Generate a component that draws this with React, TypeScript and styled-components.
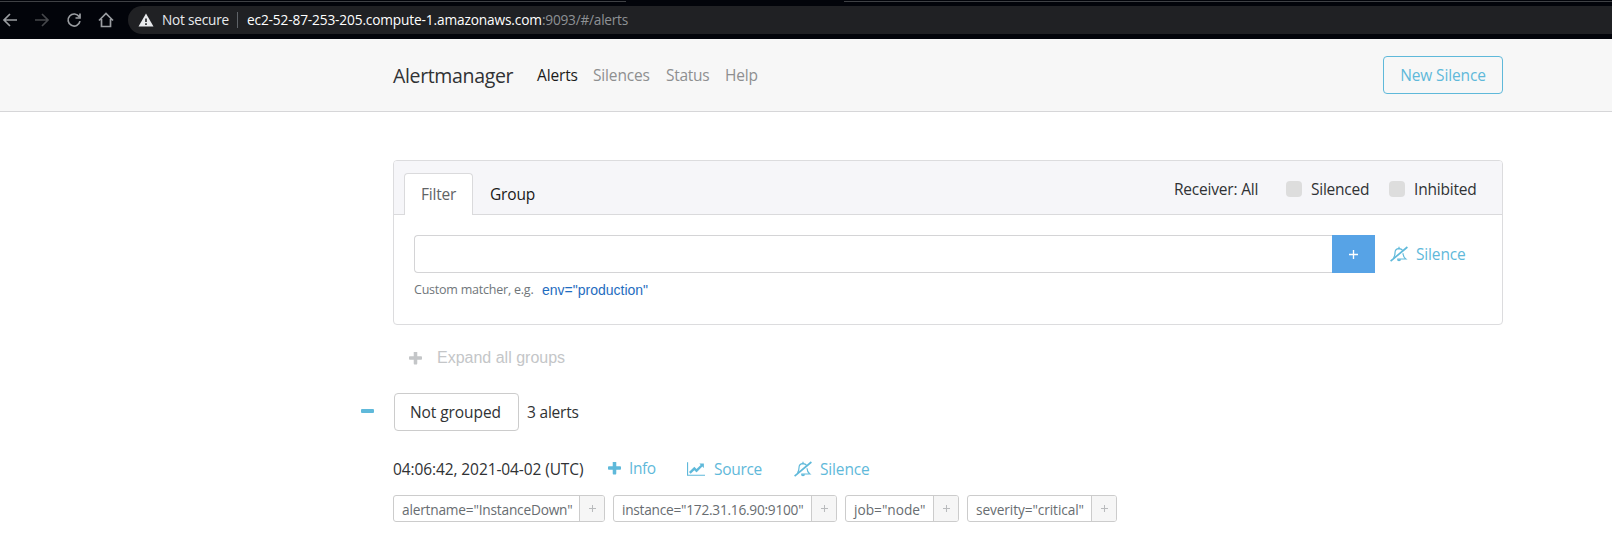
import React from 'react';
import styled, { createGlobalStyle } from 'styled-components';

const UI = '"Open Sans", "Noto Sans", sans-serif';
const ARIAL = '"Liberation Sans", Arial, sans-serif';
const BLUE = '#5fb9da';

const Global = createGlobalStyle`
  *, *::before, *::after { box-sizing: border-box; }
  body { margin: 0; background: #fff; color: #303234; font: 400 15.5px/24px ${UI}; letter-spacing: -0.15px; }
  button { font: inherit; letter-spacing: inherit; color: inherit; background: none; border: 0; padding: 0; margin: 0; }
  svg { display: block; flex: none; }
`;

/* Text with a fixed advance, so that neighbours keep their place. */
const Text = styled.span<{ $w?: number; $size?: number; $color?: string; $ls?: number; $arial?: boolean }>`
  display: block;
  flex: none;
  white-space: nowrap;
  ${(p) => p.$w && `width: ${p.$w}px;`}
  ${(p) => p.$size && `font-size: ${p.$size}px;`}
  ${(p) => p.$color && `color: ${p.$color};`}
  ${(p) => p.$ls !== undefined && `letter-spacing: ${p.$ls}px;`}
  ${(p) => p.$arial && `font-family: ${ARIAL}; letter-spacing: 0;`}
`;

const Browser = styled.div`
  height: 39px;
  background: #02040a;
  overflow: hidden;
`;
const TabStrip = styled.div`
  display: flex;
  justify-content: space-between;
  height: 6px;
  padding-top: 1px;
`;
const TabEdge = styled.div<{ $w: number }>`
  width: ${(p) => p.$w}px;
  height: 1px;
  background: #3f4145;
`;
const Toolbar = styled.div`
  display: flex;
  height: 28px;
`;
const NavIcons = styled.div`
  display: flex;
  align-items: center;
  width: 128px;
  gap: 16px;
  padding-left: 2px;
`;
const AddressBar = styled.div`
  flex: 1;
  display: flex;
  align-items: center;
  height: 28px;
  padding-left: 10px;
  border-radius: 14px 0 0 14px;
  background: #202124;
  color: #e8eaed;
`;
const Divider = styled.span`
  width: 1px;
  height: 16px;
  margin: 0 9px 0 7px;
  background: #5f6368;
`;

const Header = styled.header`
  height: 73px;
  background: #f7f7f7;
  border-bottom: 1px solid #d6d6d8;
`;
const Container = styled.div`
  width: 1110px;
  margin-left: 393px;
`;
const HeaderRow = styled(Container)`
  display: flex;
  align-items: center;
  height: 72px;
`;
const Brand = styled(Text)`
  padding-top: 2px;
`;
const Nav = styled.nav`
  display: flex;
  flex: 1;
  gap: 16px;
  color: #8e8f90;
`;
const OutlineButton = styled.button`
  width: 120px;
  height: 38px;
  border: 1px solid ${BLUE};
  border-radius: 4px;
  color: ${BLUE};
`;

const Card = styled(Container).attrs({ as: 'section' })`
  height: 165px;
  margin-top: 48px;
  border: 1px solid #dcdcde;
  border-radius: 4px;
`;
const CardHeader = styled.div`
  display: flex;
  height: 54px;
  padding: 12px 25px 0 10px;
  background: #f6f6f9;
  border-bottom: 1px solid #dadadc;
  border-radius: 3px 3px 0 0;
`;
const Tab = styled.div<{ $active?: boolean }>`
  height: 42px;
  padding: 8px 16px 0;
  border: 1px solid ${(p) => (p.$active ? '#dadadc' : 'transparent')};
  border-bottom: 0;
  border-radius: 4px 4px 0 0;
  background: ${(p) => (p.$active ? '#fff' : 'transparent')};
  color: ${(p) => (p.$active ? '#5f6366' : '#1a1a1a')};
`;
const Options = styled.div`
  display: flex;
  align-items: center;
  height: 32px;
  margin-left: auto;
`;
const Check = styled.span`
  width: 16px;
  height: 16px;
  margin-right: 9px;
  border-radius: 4px;
  background: #ddd;
`;
const CardBody = styled.div`
  padding: 20px;
`;
const FilterRow = styled.div`
  display: flex;
  align-items: center;
`;
const FilterInput = styled.input`
  width: 918px;
  height: 38px;
  border: 1px solid #d4d4d6;
  border-right: 0;
  border-radius: 4px 0 0 4px;
  outline: 0;
  background: #fff;
`;
const AddButton = styled.button`
  display: flex;
  align-items: center;
  justify-content: center;
  width: 43px;
  height: 38px;
  margin-right: 15px;
  background: #57a3e6;
  color: #fff;
`;
const Hint = styled.div`
  display: flex;
  margin-top: 5px;
  color: #70767a;
`;

const ExpandRow = styled(Container)`
  display: flex;
  align-items: center;
  gap: 15px;
  height: 24px;
  margin-top: 21px;
  padding-left: 16px;
  color: #c4c6c8;
`;
const GroupRow = styled.div`
  display: flex;
  align-items: center;
  height: 38px;
  margin: 23px 0 0 361px;
`;
const GroupButton = styled.button`
  display: flex;
  align-items: center;
  width: 125px;
  height: 38px;
  margin: 0 8px 0 20px;
  padding-left: 15px;
  border: 1px solid #ccc;
  border-radius: 4px;
`;
const AlertRow = styled(Container)`
  display: flex;
  align-items: center;
  height: 24px;
  margin-top: 26px;
`;
const Action = styled.button<{ $gap: number; $after?: number; $lift?: number }>`
  display: flex;
  align-items: center;
  gap: ${(p) => p.$gap}px;
  height: 24px;
  margin: 0 ${(p) => p.$after ?? 0}px ${(p) => p.$lift ?? 0}px 0;
  color: ${BLUE};
  text-align: left;
`;
const Labels = styled(Container)`
  display: flex;
  gap: 8px;
  margin-top: 14px;
`;
const Label = styled.div<{ $w: number }>`
  display: flex;
  width: ${(p) => p.$w}px;
  height: 27px;
  border: 1px solid #ccc;
  border-radius: 3px;
  color: #686d71;
  line-height: 27px;
  overflow: hidden;
`;
const LabelText = styled(Text)`
  flex: 1;
  padding-left: 8px;
`;
const LabelAdd = styled.button`
  display: flex;
  align-items: center;
  justify-content: center;
  width: 25px;
  border-left: 1px solid #ccc;
  background: #f6f6f6;
  color: #b9bbbd;
`;

const ThinPlus = ({ size = 7 }: { size?: number }) => (
  <svg width={size} height={size} viewBox="0 0 8 8" stroke="currentColor" strokeWidth="1.2">
    <path d="M4 0v8M0 4h8" />
  </svg>
);
const Plus = () => (
  <svg width="13" height="13" viewBox="192 192 1408 1408" fill="currentColor">
    <path d="M1600 736v192q0 40-28 68t-68 28h-416v416q0 40-28 68t-68 28h-192q-40 0-68-28t-28-68v-416h-416q-40 0-68-28t-28-68v-192q0-40 28-68t68-28h416v-416q0-40 28-68t68-28h192q40 0 68 28t28 68v416h416q40 0 68 28t28 68z" />
  </svg>
);
const Minus = () => (
  <svg width="13" height="13" viewBox="0 0 13 13">
    <rect y="3" width="13" height="4" rx="1" fill={BLUE} />
  </svg>
);
const Chart = () => (
  <svg width="18" height="16" viewBox="0 0 2048 1792" fill="currentColor">
    <path d="M2048 1536v128h-2048v-1536h128v1408h1920zm-128-1248v435q0 21-19.5 29.5t-35.5-7.5l-121-121-633 633q-10 10-23 10t-23-10l-233-233-416 416-192-192 585-585q10-10 23-10t23 10l233 233 464-464-121-121q-16-16-7.5-35.5t29.5-19.5h435q14 0 23 9t9 23z" />
  </svg>
);
const BellOff = () => (
  <svg width="18" height="16" viewBox="0 0 18 16" fill="none" stroke="currentColor" strokeWidth="1.2">
    <path d="M3.5 11.8C4.8 10.400 5 8.600 5 6.800C5 4.400 6.400 2.700 9 2.600C10.800 2.700 11.900 3.400 12.600 4.400M13 7.200C13.100 9.400 13.600 11.300 15.800 13H7.200" />
    <path d="M9 2.500V.8" />
    <path d="M7 13.300a2 2 0 0 0 4 0z" fill="currentColor" stroke="none" />
    <path d="M.6 15.200L17.400 1" strokeWidth="1.700" />
  </svg>
);
const BrowserIcon = ({ d, color = '#9a9da1' }: { d: string; color?: string }) => (
  <svg width="16" height="16" viewBox="0 0 16 16" fill="none" stroke={color} strokeWidth="1.7">
    <path d={d} />
  </svg>
);
const Warning = () => (
  <svg width="16" height="14" viewBox="0 0 16 14">
    <path d="M8 .5L15.500 13.500H.5z" fill="#e8eaed" />
    <path d="M8 5.500v3.500M8 10.200v1.700" stroke="#202124" strokeWidth="1.600" />
  </svg>
);
const Security = styled.div`
  width: 76px;
  padding-left: 8px;
`;

const LABELS = [
  { text: 'alertname="InstanceDown"', width: 212, ls: -0.2 },
  { text: 'instance="172.31.16.90:9100"', width: 224, ls: -0.25 },
  { text: 'job="node"', width: 114, ls: 0 },
  { text: 'severity="critical"', width: 150, ls: -0.1 },
];

export default function App() {
  return (
    <>
      <Global />
      <Browser>
        <TabStrip>
          <TabEdge $w={626} />
          <TabEdge $w={768} />
        </TabStrip>
        <Toolbar>
          <NavIcons>
            <BrowserIcon d="M15 8H2M8 2L2 8l6 6" />
            <BrowserIcon d="M1 8h13M8 2l6 6-6 6" color="#45474b" />
            <BrowserIcon d="M13.200 4.800A6 6 0 1 0 14 9.200M14 1.500V6H9.500" />
            <BrowserIcon d="M1 8.500L8 1.500l7 7M3.500 7v7.500h9V7" />
          </NavIcons>
          <AddressBar>
            <Warning />
            <Security><Text $size={13.6} $ls={-0.2}>Not secure</Text></Security>
            <Divider />
            <Text $w={295} $size={13.7} $color="#fff" $ls={-0.15}>ec2-52-87-253-205.compute-1.amazonaws.com</Text>
            <Text $size={13.7} $color="#8e9195" $ls={-0.25}>:9093/#/alerts</Text>
          </AddressBar>
        </Toolbar>
      </Browser>

      <Header>
        <HeaderRow>
          <Brand $w={144} $size={19.5} $ls={-0.35}>Alertmanager</Brand>
          <Nav>
            <Text $w={40} $color="#1a1a1a">Alerts</Text>
            <Text $w={57}>Silences</Text>
            <Text $w={43} $ls={-0.3}>Status</Text>
            <Text>Help</Text>
          </Nav>
          <OutlineButton>New Silence</OutlineButton>
        </HeaderRow>
      </Header>

      <Card>
        <CardHeader>
          <Tab $active><Text $w={35} $ls={-0.2}>Filter</Text></Tab>
          <Tab><Text>Group</Text></Tab>
          <Options>
            <Text $w={112} $ls={-0.2}>Receiver: All</Text>
            <Check />
            <Text $w={78} $ls={-0.25}>Silenced</Text>
            <Check />
            <Text $w={63} $ls={-0.2}>Inhibited</Text>
          </Options>
        </CardHeader>
        <CardBody>
          <FilterRow>
            <FilterInput />
            <AddButton><ThinPlus size={9} /></AddButton>
            <Action $gap={8} $lift={1}><BellOff /><Text>Silence</Text></Action>
          </FilterRow>
          <Hint>
            <Text $w={128} $size={12.5} $ls={-0.22}>Custom matcher, e.g.</Text>
            <Text $arial $size={14} $color="#1f6dc0">env="production"</Text>
          </Hint>
        </CardBody>
      </Card>

      <ExpandRow>
        <Plus />
        <Text $arial $size={16}>Expand all groups</Text>
      </ExpandRow>

      <GroupRow>
        <Minus />
        <GroupButton><Text $ls={-0.08}>Not grouped</Text></GroupButton>
        <Text $ls={-0.2}>3 alerts</Text>
      </GroupRow>

      <AlertRow>
        <Text $w={215} $ls={-0.1}>04:06:42, 2021-04-02 (UTC)</Text>
        <Action $gap={8} $after={31} $lift={2}><Plus /><Text $w={27} $ls={-0.4}>Info</Text></Action>
        <Action $gap={9} $after={32}><Chart /><Text $w={48} $ls={-0.3}>Source</Text></Action>
        <Action $gap={8}><BellOff /><Text>Silence</Text></Action>
      </AlertRow>

      <Labels>
        {LABELS.map((l) => (
          <Label key={l.text} $w={l.width}>
            <LabelText $size={13.7} $ls={l.ls}>{l.text}</LabelText>
            <LabelAdd><ThinPlus /></LabelAdd>
          </Label>
        ))}
      </Labels>
    </>
  );
}
